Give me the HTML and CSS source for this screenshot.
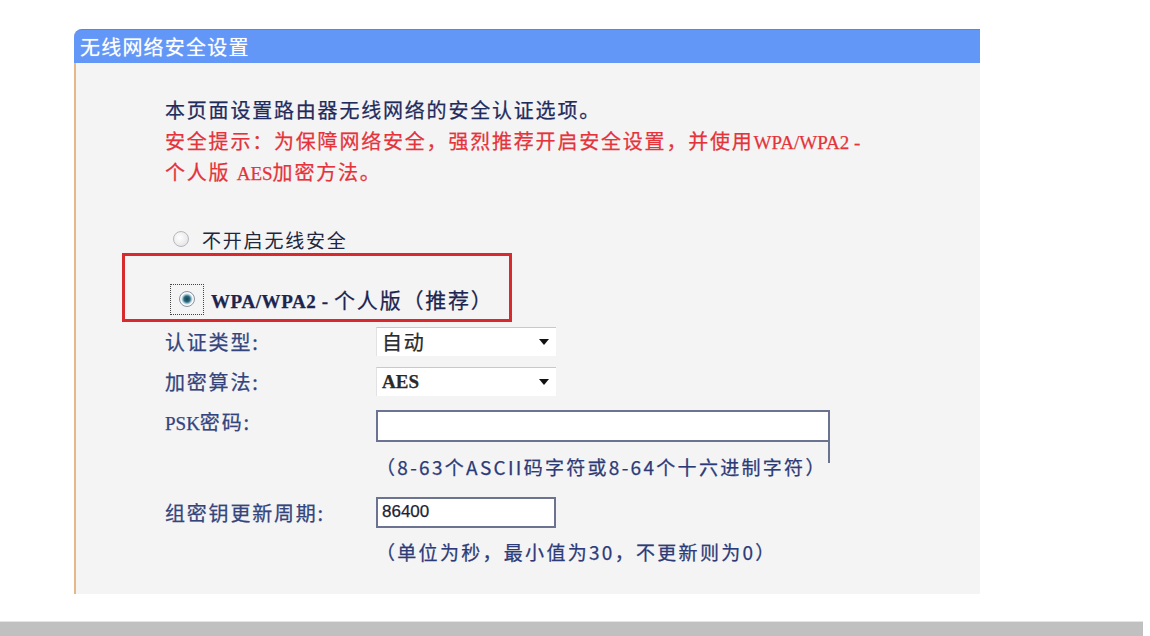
FILE: index.html
```html
<!DOCTYPE html>
<html lang="zh-CN">
<head>
    <meta charset="UTF-8">
    <meta name="viewport" content="width=device-width, initial-scale=1.0">
    <title>无线网络安全设置</title>
    <link rel="stylesheet" href="styles.css">
</head>
<body>
    <div class="panel">
        <div class="panel-title">无线网络安全设置</div>
        <div class="panel-body">
            <p class="intro">
                本页面设置路由器无线网络的安全认证选项。<br>
                <span class="warn">安全提示：为保障网络安全，强烈推荐开启安全设置，并使用<span class="latin">WPA/WPA2 -</span><br>个人版 <span class="latin">AES</span>加密方法。</span>
            </p>

            <div class="radio-row off">
                <span class="radio"></span>
                <span class="radio-text">不开启无线安全</span>
            </div>

            <!-- highlighted option -->
            <div class="mark-box">
                <div class="radio-row">
                    <span class="radio-focus"><span class="radio checked"></span></span>
                    <span class="radio-text"><span class="latin">WPA/WPA2 - </span>个人版（推荐）</span>
                </div>
            </div>

            <div class="field first">
                <div class="field-label">认证类型:</div>
                <div class="select"><span class="select-value">自动</span><span class="select-arrow"></span></div>
            </div>
            <div class="field">
                <div class="field-label">加密算法:</div>
                <div class="select"><span class="select-value latin">AES</span><span class="select-arrow"></span></div>
            </div>
            <div class="field field-psk">
                <div class="field-label"><span class="latin">PSK</span>密码:</div>
                <input class="text-input wide" type="text" value="">
            </div>
            <div class="field hint-row">
                <div class="field-label"></div>
                <div class="hint psk-hint">（8-63个ASCII码字符或8-64个十六进制字符）</div>
            </div>
            <div class="field field-key">
                <div class="field-label">组密钥更新周期:</div>
                <input class="text-input short" type="text" value="86400">
            </div>
            <div class="field hint-row last">
                <div class="field-label"></div>
                <div class="hint">（单位为秒，最小值为30，不更新则为0）</div>
            </div>
        </div>
    </div>

    <div class="bottom-bar"></div>
</body>
</html>
```

FILE: styles.css
```css
html, body {
    margin: 0;
    padding: 0;
    background: #fff;
    overflow: hidden;
}
body {
    font-family: "Noto Sans CJK SC", sans-serif;
    font-size: 20px;
    letter-spacing: 1.8px;
    color: #1f2b5c;
    -webkit-text-stroke: 0.25px;
}
.latin {
    font-family: "Liberation Serif", serif;
    font-size: 19px;
    line-height: 1;
    letter-spacing: 0;
}
.panel {
    margin: 29px 0 0 74px;
    width: 906px;
}
.panel-title {
    height: 33px;
    line-height: 33px;
    padding-left: 6px;
    background: #6297f8;
    border-top: 1px solid #5a86dc;
    border-top-left-radius: 8px;
    box-shadow: 0 1px 0 #bcd5fb;
    color: #fff;
    font-size: 20px;
    letter-spacing: 1.2px;
    -webkit-text-stroke: 0;
    text-shadow: 0 0 1px rgba(255, 255, 255, 0.6);
}
.panel-body {
    background: #f4f4f4;
    border-left: 2px solid #e6b887;
    padding: 31px 0 25px 89px;
}
.intro {
    margin: 0;
    line-height: 31px;
}
.warn {
    color: #e4333a;
}
.radio-row {
    display: flex;
    align-items: center;
    height: 30px;
}
.radio-row.off {
    margin: 39px 0 0 8px;
    height: 26px;
}
.radio {
    display: inline-block;
    width: 14px;
    height: 14px;
    border-radius: 50%;
    border: 1px solid #b4b8c0;
    background: radial-gradient(circle at 40% 40%, #fff 0, #e8e8e8 70%, #d2d2d2 100%);
}
.radio.checked {
    border-color: #8a93a8;
    background: radial-gradient(circle, #143f50 0, #2b6a80 3px, #9fc3d0 4.5px, #fff 6px, #d8dde4 100%);
}
.radio-text {
    margin-left: 13px;
}
.radio-row.off .radio-text {
    font-size: 19px;
    color: #20273d;
    -webkit-text-stroke: 0;
}
.mark-box {
    margin: 1px 0 0 -43px;
    width: 384px;
    height: 63px;
    border: 3px solid #d82a2c;
}
.mark-box .radio-row {
    margin: 28px 0 0 45px;
}
.radio-focus {
    display: inline-flex;
    align-items: center;
    justify-content: center;
    width: 34px;
    height: 31px;
    border: 1px dotted #444;
    box-sizing: border-box;
    -webkit-text-stroke: 0;
}
.mark-box .radio-text {
    margin-left: 7px;
    font-size: 21px;
    color: #1b2550;
}
.mark-box .latin {
    font-size: 19px;
    font-weight: 700;
    letter-spacing: 0.6px;
}
.field {
    display: flex;
    align-items: center;
    height: 40px;
}
.field.first {
    margin-top: -1px;
}
.field-label {
    width: 211px;
    flex: none;
    color: #34447c;
}
.select {
    display: flex;
    align-items: center;
    justify-content: space-between;
    width: 180px;
    height: 29px;
    box-sizing: border-box;
    padding: 0 7px 0 5px;
    background: #fff;
    border-top: 1px solid #c9c9c9;
    border-left: 1px solid #e2e2e2;
}
.select-value {
    color: #2a2a2a;
}
.select-value.latin {
    font-weight: 700;
}
.select-arrow {
    width: 0;
    height: 0;
    border-left: 5px solid transparent;
    border-right: 5px solid transparent;
    border-top: 6px solid #111;
}
.field-psk .text-input {
    margin-top: 10px;
}
.text-input {
    box-sizing: border-box;
    height: 32px;
    border: 2px solid #6b7390;
    background: #fff;
    padding: 0 4px;
    font-family: "Liberation Sans", sans-serif;
    font-size: 17px;
    color: #1c2333;
    letter-spacing: 0;
    outline: none;
}
.text-input.wide {
    width: 454px;
}
.text-input.short {
    width: 180px;
    height: 31px;
}
.hint-row {
    height: 50px;
}
.field-key {
    height: 42px;
}
.hint-row.last {
    height: 36px;
}
.hint {
    color: #2c3b78;
    font-size: 19px;
    letter-spacing: 2.3px;
}
.psk-hint {
    width: 454px;
    align-self: stretch;
    display: flex;
    align-items: center;
    background: linear-gradient(#6b7390, #6b7390) right top / 2px 22px no-repeat;
}
.bottom-bar {
    margin-top: 27px;
    width: 1143px;
    height: 14px;
    background: #c0c0c0;
    border-top: 1px solid #e4e4e4;
}
```
